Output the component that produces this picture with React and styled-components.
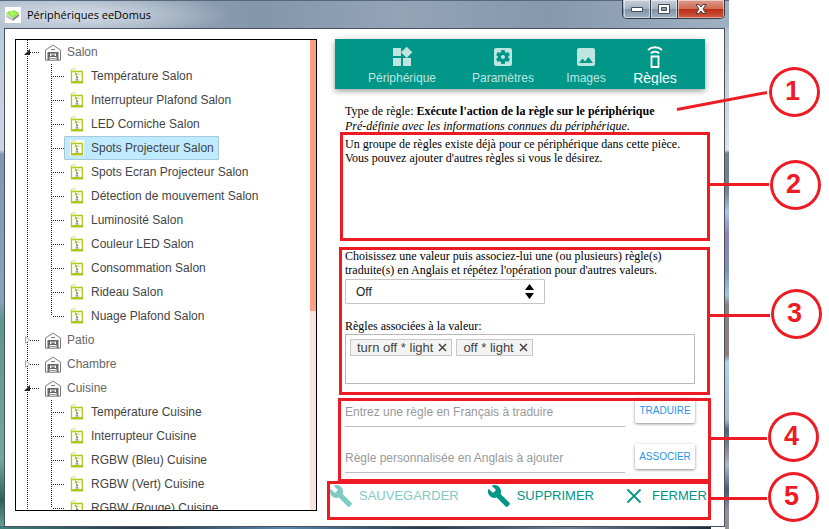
import React, { useState } from 'react';
import styled, { createGlobalStyle, css } from 'styled-components';
import { MdWidgets, MdSettingsApplications, MdImage, MdBuild } from 'react-icons/md';

const TEAL = '#009688';
const RED = '#ed1c24';
const SANS = '"Liberation Sans", Arial, sans-serif';
const SERIF = '"Liberation Serif", "Times New Roman", serif';

const GlobalStyle = createGlobalStyle`
  *, *::before, *::after { box-sizing: border-box; }
  body { margin: 0; background: #fff; font-family: ${SANS}; font-size: 12px; color: #333; }
  button, input, select { font: inherit; margin: 0; }
  ul, p { margin: 0; padding: 0; list-style: none; }
`;

const Page = styled.div`
  position: relative;
  height: 100vh;
  min-height: 529px;
  padding-right: 100px;
  overflow: hidden;
`;

/* ---------- window chrome ---------- */
const WindowFrame = styled.div`
  display: flex;
  flex-direction: column;
  height: 100%;
  padding: 0 4px 0 4px;
  background:
    linear-gradient(#fff, #fff) right 4px bottom 0 / 14px 3px no-repeat,
    linear-gradient(90deg, #3f7f78, #27384a 20%, #5a86a8 40%, #273a4c 60%, #6d7f95 80%, #1e2c3b) left bottom / calc(100% - 18px) 3px no-repeat,
    linear-gradient(180deg, #b9c8d9 0, #ccd6e1 150px, #8296b4 154px, #8aa0bd 300px, #5f9590 320px, #73a79c 460px, #2f5f5a 500px, #6fa296 529px) left top / 4px 100% no-repeat,
    linear-gradient(180deg, #a9b9ca 0, #dfe3e8 150px, #74848a 153px, #70808c 190px, #a9c5ea 212px, #8f7fb8 235px, #7b93b4 270px, #a5c5e4 295px, #8c7f78 305px, #8b807c 355px, #b0d2ee 362px, #a7b9c4 420px, #4a617f 430px, #9a9698 455px, #a9bccb 465px, #44597a 490px, #979093 510px) right top / 4px 100% no-repeat;
`;

const TitleBar = styled.header`
  display: flex;
  align-items: center;
  gap: 6px;
  height: 28px;
  margin: 0 -4px;
  padding: 0 4px 0 5px;
  flex: none;
  border-top: 1px solid #56687c;
  background:
    radial-gradient(ellipse 150px 24px at 80px 14px, rgba(228, 234, 241, 0.8), rgba(228, 234, 241, 0) 100%),
    linear-gradient(90deg, #a9b8c8 0, #8496ac 35%, #93a4b7 55%, #8698ae 75%, #9fb0c2 100%);
`;

const Title = styled.h1`
  flex: 1;
  margin: 0;
  font: 400 11px/16px "Open Sans", "Noto Sans", sans-serif;
  color: #000;
`;

const WindowButtons = styled.div`
  display: flex;
  align-self: flex-start;
  margin-top: -1px;
  border: 1px solid #2e3a48;
  border-top: 0;
  border-radius: 0 0 5px 5px;
  overflow: hidden;
`;

const WindowButton = styled.button`
  display: grid;
  place-items: center;
  width: ${(p) => (p.$close ? 47 : 27)}px;
  height: 18px;
  padding: 0;
  border: 0;
  border-left: 1px solid ${(p) => (p.$first ? 'transparent' : '#2e3a48')};
  box-shadow: inset 0 0 0 1px rgba(255, 255, 255, 0.5);
  background: ${(p) =>
    p.$close
      ? 'linear-gradient(#dd9a8c 0, #cf6b57 48%, #b92f18 52%, #d0583f 100%)'
      : 'linear-gradient(#c6ced8 0, #a9b5c4 48%, #8292a6 52%, #a3b3c6 100%)'};
`;

const Client = styled.main`
  flex: 1;
  display: flex;
  gap: 12px;
  min-height: 0;
  margin-bottom: 2px;
  padding: 10px 13px 15px 10px;
  border: 1px solid #47525f;
  background: #fff;
`;

/* ---------- device tree ---------- */
const TreePanel = styled.nav`
  display: flex;
  flex: none;
  width: 302px;
  border: 1px solid #000;
  overflow: hidden;
`;

const ScrollRail = styled.div`
  flex: none;
  width: 6px;
  background: #fae5de;
`;

const ScrollThumb = styled.div`
  height: 271px;
  background: #fa9f86;
`;

const dots = 'repeating-linear-gradient(180deg, #222 0 1px, transparent 1px 2px)';

const RoomList = styled.ul`
  flex: 1;
  background: ${dots} 11px 0 / 1px 100% no-repeat;
`;

const DeviceList = styled.ul`
  background: ${dots} 35px 0 / 1px calc(100% - 12px) no-repeat;
`;

const RoomRow = styled.div`
  display: flex;
  align-items: center;
  height: 24px;
  padding-left: 8px;
  color: #666;
`;

const Toggle = styled.button`
  display: flex;
  padding: 0;
  border: 0;
  background: none;
`;

const Connector = styled.span`
  flex: none;
  width: ${(p) => p.$width}px;
  height: 1px;
  background: repeating-linear-gradient(90deg, #222 0 1px, transparent 1px 2px);
`;

const RoomName = styled.span`
  display: flex;
  align-items: center;
  gap: 6px;
  padding-left: 5px;
`;

const DeviceRow = styled.li`
  display: flex;
  align-items: center;
  height: 24px;
  padding-left: 37px;
`;

const DeviceButton = styled.button`
  display: flex;
  align-items: center;
  gap: 7px;
  height: 24px;
  padding: 0 4px 0 5px;
  border: 1px solid transparent;
  border-radius: 1px;
  background: none;
  color: #444;
  white-space: nowrap;
  ${(p) =>
    p.$selected &&
    css`
      border-color: #a5c9d8;
      background: #beebff;
      svg { background: #fff; }
    `}
`;

/* ---------- right pane ---------- */
const Pane = styled.section`
  flex: 1;
  min-width: 0;
`;

const Tabs = styled.div`
  display: grid;
  grid-template-columns: 100fr 102fr 64fr 74fr;
  height: 50px;
  margin: 0 6px;
  padding: 0 13px 0 17px;
  background: ${TEAL};
  box-shadow: 0 2px 6px rgba(0, 0, 0, 0.4);
`;

const Tab = styled.button`
  display: flex;
  flex-direction: column;
  align-items: center;
  padding: 6px 0 0;
  border: 0;
  background: none;
  color: ${(p) => (p.$active ? '#fff' : '#bfe5e1')};
  font-size: ${(p) => (p.$active ? 14 : 12)}px;
  line-height: 18px;
`;

const TabLabel = styled.span`
  height: 16px;
  overflow: hidden;
`;

const Body = styled.div`
  padding: 15px 16px 0;
  font-family: ${SERIF};
  line-height: 14px;
  color: #000;
`;

const RuleType = styled.div`
  line-height: 15px;
`;

const Notice = styled.p`
  min-height: 112px;
  margin-top: 3px;
`;

const SelectBox = styled.div`
  display: grid;
  align-items: center;
  width: 200px;
  margin: 2px 0 15px;
  font-family: ${SANS};
  > * { grid-area: 1 / 1; }
  > svg { justify-self: end; margin-right: 11px; pointer-events: none; }
`;

const Select = styled.select`
  width: 100%;
  height: 25px;
  padding: 0 10px;
  border: 1px solid #c4c4c4;
  border-radius: 1px;
  appearance: none;
  background: #fff;
  color: #222;
`;

const TagBox = styled.ul`
  display: flex;
  align-items: flex-start;
  gap: 4px;
  height: 50px;
  margin-top: 1px;
  padding: 4px;
  border: 1px solid #b9b9b9;
`;

const Tag = styled.li`
  display: flex;
  align-items: center;
  gap: 5px;
  height: 17px;
  padding: 0 4px 0 6px;
  border: 1px solid #c8c8c8;
  background: #f3f3f3;
  color: #444;
  font: 13px/15px ${SANS};
`;

const TagRemove = styled.button`
  display: flex;
  padding: 0;
  border: 0;
  background: none;
  color: #444;
`;

const Fields = styled.div`
  display: grid;
  gap: 16px;
  padding: 13px 16px 0;
`;

const FieldRow = styled.div`
  display: flex;
  align-items: flex-start;
  gap: 10px;
  height: 30px;
`;

const TextInput = styled.input`
  flex: 1;
  min-width: 0;
  height: 30px;
  padding: 0;
  border: 0;
  border-bottom: 1px solid #bdbdbd;
  outline: none;
  background: none;
  &::placeholder { color: #999; opacity: 1; }
`;

const RaisedButton = styled.button`
  width: 60px;
  height: 25px;
  margin-top: 1px;
  padding: 0;
  border: 0;
  border-radius: 2px;
  background: #fff;
  box-shadow: 0 1px 3px rgba(0, 0, 0, 0.45);
  color: #2a94ea;
  font-size: 10px;
`;

const Actions = styled.div`
  display: flex;
  gap: 28px;
  margin-top: 11px;
`;

const ActionButton = styled.button`
  display: flex;
  align-items: center;
  gap: 6px;
  padding: 0;
  border: 0;
  background: none;
  color: ${TEAL};
  font-size: 13px;
  line-height: 24px;
  &:disabled { color: #7fcbc4; }
`;

/* ---------- numbered callouts lying over the window ---------- */
const Highlight = styled.div`
  position: absolute;
  left: ${(p) => p.$left}px;
  right: ${(p) => p.$right}px;
  top: ${(p) => p.$top}px;
  height: ${(p) => p.$height}px;
  border: 3px solid ${RED};
  pointer-events: none;
`;

const Leaders = styled.svg`
  position: absolute;
  top: 0;
  right: 0;
  width: 160px;
  height: 529px;
  pointer-events: none;
`;

const Marker = styled.div`
  position: absolute;
  right: ${(p) => p.$right}px;
  top: ${(p) => p.$top}px;
  display: grid;
  place-items: center;
  width: 51px;
  height: 50px;
  padding: 0 4px 3px 0;
  border: 3px solid ${RED};
  border-radius: 50%;
  color: ${RED};
  font: bold 27px/30px ${SANS};
`;

const AppIcon = () => (
  <svg width="16" height="16" viewBox="0 0 16 16" aria-hidden="true">
    <path d="M0 0h16v16H0z" fill="#fff" />
    <path d="M1 7.5 8 11v3L1 10z" fill="#c4c4c4" />
    <path d="m8 11 6-4v2l-6 5z" fill="#8a8a8a" />
    <path d="M1 6.5 4 4l2 .5L9 3l5 3-1 1.500L8 11z" fill="#93e64c" />
    <path d="m4 6.500 4-1.500 3 1.500-3 2z" fill="#b9f56e" />
  </svg>
);

const HouseIcon = () => (
  <svg width="16" height="17" viewBox="0 0 16 17" fill="none" aria-hidden="true">
    <path d="M.5 6.200 8 1l7.500 5.200v10H.5z" stroke="#777" />
    <path d="M6 5.500h4" stroke="#777" />
    <path d="M2.500 8h11v8h-2v-3h-7v3h-2z" fill="#666" />
    <path d="M5 9.500h1.500V12H5zM9.500 9.500H11V12H9.500z" fill="#fff" />
    <path d="M7 9.500h2v1.500H7z" fill="#bbb" />
    <path d="M5 14.500h6" stroke="#999" />
  </svg>
);

const DeviceIcon = () => (
  <svg width="14" height="16" viewBox="0 0 14 16" fill="none" aria-hidden="true">
    <path d="M1.500 3.500h10.800v11H1.500z" stroke="#b4c61c" strokeWidth="1.300" />
    <path d="M1 13h12v2.300H1z" fill="#b4c61c" />
    <path d="M1 4V2.500C1 .2 5.500.2 5.500 2.500V6" stroke="#c3d148" strokeWidth=".9" />
    <path d="M4.200 5.500h3.800L6.500 8.200z" fill="#a9bd10" />
    <path d="M8 6.500h3.500" stroke="#e3e9ac" />
    <path d="M6 8.500h2v1.800H6z" fill="#777" />
    <path d="m4.800 12.400 2.200-2 2.500 2z" fill="#8a8a8a" />
  </svg>
);

const RemoteIcon = () => (
  <svg width="24" height="24" viewBox="0 0 24 24" fill="none" stroke="currentColor" strokeWidth="2" aria-hidden="true">
    <path d="M8.500 11.500h7v10.500h-7z" strokeWidth="1.800" />
    <path d="M7.800 8.300a6.200 6.200 0 0 1 8.400 0M5 5a10.400 10.400 0 0 1 14 0" />
  </svg>
);

const ToggleIcon = ({ open }) => (
  <svg width="6" height="8" viewBox="0 0 6 8" aria-hidden="true">
    {open ? <path d="M6 1v6H0z" fill="#222" /> : <path d="M1.500.5v7L5.500 4z" fill="#fff" stroke="#aaa" />}
  </svg>
);

const CrossIcon = ({ size, stroke }) => (
  <svg width={size} height={size} viewBox={`0 0 ${size} ${size}`} stroke="currentColor" strokeWidth={stroke} aria-hidden="true">
    <path d={`M1 1 ${size - 1} ${size - 1}M${size - 1} 1 1 ${size - 1}`} />
  </svg>
);

const CloseIcon = () => (
  <svg width="24" height="24" viewBox="0 0 24 24" stroke="currentColor" strokeWidth="1.800" aria-hidden="true">
    <path d="m5.500 5.500 13 13m0-13-13 13" />
  </svg>
);

const rooms = [
  {
    name: 'Salon',
    devices: [
      'Température Salon', 'Interrupteur Plafond Salon', 'LED Corniche Salon', 'Spots Projecteur Salon',
      'Spots Ecran Projecteur Salon', 'Détection de mouvement Salon', 'Luminosité Salon', 'Couleur LED Salon',
      'Consommation Salon', 'Rideau Salon', 'Nuage Plafond Salon',
    ],
  },
  { name: 'Patio' },
  { name: 'Chambre' },
  {
    name: 'Cuisine',
    devices: ['Température Cuisine', 'Interrupteur Cuisine', 'RGBW (Bleu) Cuisine', 'RGBW (Vert) Cuisine', 'RGBW (Rouge) Cuisine'],
  },
];

const tabs = [
  { label: 'Périphérique', Icon: MdWidgets },
  { label: 'Paramètres', Icon: MdSettingsApplications },
  { label: 'Images', Icon: MdImage },
  { label: 'Règles', Icon: RemoteIcon, active: true },
];

const highlights = [
  { left: 340, right: 119, top: 132, height: 109 },
  { left: 339, right: 119, top: 247, height: 148 },
  { left: 338, right: 118, top: 398, height: 84 },
  { left: 327, right: 118, top: 481, height: 39 },
];

const markers = [
  { right: 9, top: 67 },
  { right: 8, top: 160 },
  { right: 7, top: 289 },
  { right: 10, top: 412 },
  { right: 10, top: 472 },
];

export default function App() {
  const [selected, setSelected] = useState('Spots Projecteur Salon');
  return (
    <Page>
      <GlobalStyle />
      <WindowFrame>
        <TitleBar>
          <AppIcon />
          <Title>Périphériques eeDomus</Title>
          <WindowButtons>
            <WindowButton $first aria-label="Réduire">
              <svg width="12" height="5" viewBox="0 0 12 5"><path d="M.5.5h11v4H.5z" fill="#fff" stroke="#444b5a" /></svg>
            </WindowButton>
            <WindowButton aria-label="Agrandir">
              <svg width="12" height="10" viewBox="0 0 12 10"><path d="M.5.500h11v9H.5z" fill="#fff" stroke="#444b5a" /><path d="M3.500 3.500h5v3h-5z" fill="#8d9bb0" stroke="#444b5a" /></svg>
            </WindowButton>
            <WindowButton $close aria-label="Fermer la fenêtre">
              <svg width="12" height="10" viewBox="0 0 12 10"><path d="M1 .5h3L6 3 8 .5h3L8 5l3 4.500H8L6 7 4 9.500H1L4 5z" fill="#fff" stroke="#4c3a40" /></svg>
            </WindowButton>
          </WindowButtons>
        </TitleBar>
        <Client>
          <TreePanel aria-label="Périphériques">
            <RoomList>
              {rooms.map((room) => (
                <li key={room.name}>
                  <RoomRow>
                    <Toggle aria-label={room.name}><ToggleIcon open={!!room.devices} /></Toggle>
                    <Connector $width={10} />
                    <RoomName><HouseIcon />{room.name}</RoomName>
                  </RoomRow>
                  {room.devices && (
                    <DeviceList>
                      {room.devices.map((name) => (
                        <DeviceRow key={name}>
                          <Connector $width={11} />
                          <DeviceButton $selected={name === selected} onClick={() => setSelected(name)}>
                            <DeviceIcon />{name}
                          </DeviceButton>
                        </DeviceRow>
                      ))}
                    </DeviceList>
                  )}
                </li>
              ))}
            </RoomList>
            <ScrollRail><ScrollThumb /></ScrollRail>
          </TreePanel>
          <Pane>
            <Tabs>
              {tabs.map(({ label, Icon, active }) => (
                <Tab key={label} $active={active}>
                  <Icon size={24} />
                  <TabLabel>{label}</TabLabel>
                </Tab>
              ))}
            </Tabs>
            <Body>
              <RuleType>
                <p>Type de règle: <b>Exécute l'action de la règle sur le périphérique</b></p>
                <p><i>Pré-définie avec les informations connues du périphérique.</i></p>
              </RuleType>
              <Notice>
                Un groupe de règles existe déjà pour ce périphérique dans cette pièce.<br />
                Vous pouvez ajouter d'autres règles si vous le désirez.
              </Notice>
              <label htmlFor="value">
                Choisissez une valeur puis associez-lui une (ou plusieurs) règle(s)<br />
                traduite(s) en Anglais et répétez l'opération pour d'autres valeurs.
              </label>
              <SelectBox>
                <Select id="value" defaultValue="Off">
                  <option>Off</option>
                </Select>
                <svg width="9" height="15" viewBox="0 0 9 15" aria-hidden="true"><path d="M4.500 0 9 6H0zM0 9h9l-4.500 6z" fill="#000" /></svg>
              </SelectBox>
              <p>Règles associées à la valeur:</p>
              <TagBox>
                {['turn off * light', 'off * light'].map((rule) => (
                  <Tag key={rule}>
                    {rule}
                    <TagRemove aria-label={`Retirer ${rule}`}><CrossIcon size={9} stroke={1.5} /></TagRemove>
                  </Tag>
                ))}
              </TagBox>
            </Body>
            <Fields>
              <FieldRow>
                <TextInput aria-label="Règle en Français" placeholder="Entrez une règle en Français à traduire" />
                <RaisedButton>TRADUIRE</RaisedButton>
              </FieldRow>
              <FieldRow>
                <TextInput aria-label="Règle en Anglais" placeholder="Règle personnalisée en Anglais à ajouter" />
                <RaisedButton>ASSOCIER</RaisedButton>
              </FieldRow>
            </Fields>
            <Actions>
              <ActionButton disabled><MdBuild size={24} />SAUVEGARDER</ActionButton>
              <ActionButton><MdBuild size={24} />SUPPRIMER</ActionButton>
              <ActionButton><CloseIcon />FERMER</ActionButton>
            </Actions>
          </Pane>
        </Client>
      </WindowFrame>

      {highlights.map((h) => (
        <Highlight key={h.top} $left={h.left} $right={h.right} $top={h.top} $height={h.height} />
      ))}
      <Leaders viewBox="0 0 160 529" stroke={RED} strokeWidth="3" aria-hidden="true">
        <path d="M8 109.500 98 92.500M41 184.500h59M41 315.500h60M42 438.500h56M42 498.500h56" />
      </Leaders>
      {markers.map((m, i) => (
        <Marker key={m.top} $right={m.right} $top={m.top}>{i + 1}</Marker>
      ))}
    </Page>
  );
}
